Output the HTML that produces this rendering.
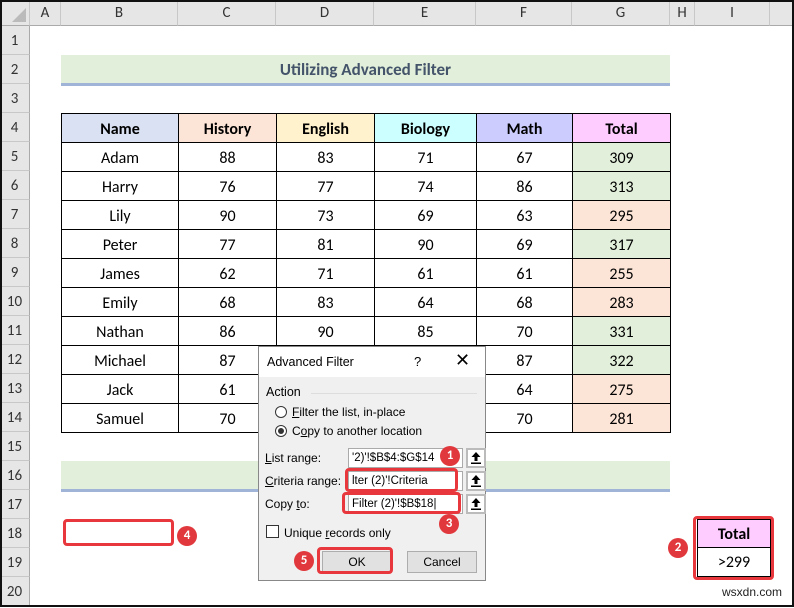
<!DOCTYPE html>
<html><head><meta charset="utf-8"><style>
*{margin:0;padding:0;box-sizing:border-box}
body{width:794px;height:607px;overflow:hidden;background:#fff;font-family:Calibri,"Liberation Sans",sans-serif;position:relative}
.a{position:absolute}
.hdr{position:absolute;top:0;height:26px;background:#e6e6e6;border-right:1px solid #c8c8c8;border-bottom:1px solid #aaa;font-size:15px;color:#333;text-align:center;line-height:27px}
.rn{position:absolute;left:0;width:30px;height:29px;background:#e6e6e6;border-bottom:1px solid #c8c8c8;border-right:1px solid #aaa;font-size:15px;color:#333;text-align:center;line-height:31px}
table{border-collapse:collapse;position:absolute;left:61px;top:113px;font-size:16px}
td{border:1px solid #000;height:29px;text-align:center;padding:2px 0 0;color:#000}
th{border:1px solid #000;height:29px;font-size:16px;padding-top:2px}
.g{background:#e2efda}.o{background:#fce4d6}
.red{position:absolute;border:3px solid #e8383d;border-radius:4px}
.num{position:absolute;width:20px;height:20px;border-radius:50%;background:#e0383c;color:#fff;font-size:13px;font-weight:bold;text-align:center;line-height:20px}
.dlg{position:absolute;left:258px;top:346px;width:228px;height:235px;background:#f0f0f0;border:1px solid #888;font-family:"Liberation Sans",sans-serif;font-size:12px;color:#000}
.inp{position:absolute;background:#fff;border:1px solid #aaa;height:20px;line-height:19px;padding-left:3px;font-size:11.5px;white-space:nowrap;overflow:hidden}
.up{position:absolute;width:20px;height:20px;background:#fff;border:2px solid #bbb}
</style></head><body>
<div class="hdr" style="left:0;width:30px"><div class="a" style="right:3px;bottom:3px;width:0;height:0;border-left:14px solid transparent;border-bottom:14px solid #bbb"></div></div>
<div class="hdr" style="left:30px;width:31px">A</div>
<div class="hdr" style="left:61px;width:117px">B</div>
<div class="hdr" style="left:178px;width:98px">C</div>
<div class="hdr" style="left:276px;width:98px">D</div>
<div class="hdr" style="left:374px;width:102px">E</div>
<div class="hdr" style="left:476px;width:96px">F</div>
<div class="hdr" style="left:572px;width:98px">G</div>
<div class="hdr" style="left:670px;width:25px">H</div>
<div class="hdr" style="left:695px;width:75px">I</div>
<div class="hdr" style="left:770px;width:24px"></div>

<div class="rn" style="top:26px">1</div><div class="rn" style="top:55px">2</div><div class="rn" style="top:84px">3</div><div class="rn" style="top:113px">4</div><div class="rn" style="top:142px">5</div><div class="rn" style="top:171px">6</div><div class="rn" style="top:200px">7</div><div class="rn" style="top:229px">8</div><div class="rn" style="top:258px">9</div><div class="rn" style="top:287px">10</div><div class="rn" style="top:316px">11</div><div class="rn" style="top:345px">12</div><div class="rn" style="top:374px">13</div><div class="rn" style="top:403px">14</div><div class="rn" style="top:432px">15</div><div class="rn" style="top:461px">16</div><div class="rn" style="top:490px">17</div><div class="rn" style="top:519px">18</div><div class="rn" style="top:548px">19</div><div class="rn" style="top:577px">20</div>

<div class="a" style="left:61px;top:55px;width:609px;height:31px;background:#e2efda;border-bottom:3px solid #9fb4d6;text-align:center;line-height:30px;font-size:17px;font-weight:bold;color:#44546a">Utilizing Advanced Filter</div>
<div class="a" style="left:61px;top:461px;width:609px;height:31px;background:#e2efda;border-bottom:3px solid #9fb4d6"></div>

<table>
<tr><th style="width:117px;background:#d9e1f2">Name</th><th style="width:98px;background:#fce4d6">History</th><th style="width:98px;background:#fff2cc">English</th><th style="width:102px;background:#ccffff">Biology</th><th style="width:96px;background:#ccccff">Math</th><th style="width:98px;background:#ffccff">Total</th></tr>
<tr><td>Adam</td><td>88</td><td>83</td><td>71</td><td>67</td><td class="g">309</td></tr>
<tr><td>Harry</td><td>76</td><td>77</td><td>74</td><td>86</td><td class="g">313</td></tr>
<tr><td>Lily</td><td>90</td><td>73</td><td>69</td><td>63</td><td class="o">295</td></tr>
<tr><td>Peter</td><td>77</td><td>81</td><td>90</td><td>69</td><td class="g">317</td></tr>
<tr><td>James</td><td>62</td><td>71</td><td>61</td><td>61</td><td class="o">255</td></tr>
<tr><td>Emily</td><td>68</td><td>83</td><td>64</td><td>68</td><td class="o">283</td></tr>
<tr><td>Nathan</td><td>86</td><td>90</td><td>85</td><td>70</td><td class="g">331</td></tr>
<tr><td>Michael</td><td>87</td><td></td><td></td><td>87</td><td class="g">322</td></tr>
<tr><td>Jack</td><td>61</td><td></td><td></td><td>64</td><td class="o">275</td></tr>
<tr><td>Samuel</td><td>70</td><td></td><td></td><td>70</td><td class="o">281</td></tr>
</table>

<div class="a" style="left:697px;top:519px;width:74px;height:29px;background:#ffccff;border:1px solid #000;text-align:center;line-height:30px;font-size:16px;font-weight:bold">Total</div>
<div class="a" style="left:697px;top:548px;width:74px;height:29px;border:1px solid #000;border-top:none;text-align:center;line-height:30px;font-size:16px">&gt;299</div>
<div class="red" style="left:693px;top:516px;width:81px;height:64px"></div>
<div class="num" style="left:668px;top:538px">2</div>

<div class="red" style="left:63px;top:519px;width:111px;height:27px"></div>
<div class="num" style="left:177px;top:526px">4</div>

<div class="dlg">
<div class="a" style="left:0;top:0;width:226px;height:30px;background:#fff"></div>
<div class="a" style="left:8px;top:8px;font-size:12.5px">Advanced Filter</div>
<div class="a" style="left:155px;top:7px;font-size:13px">?</div>
<div class="a" style="left:196px;top:3px;font-size:18px;font-weight:300">✕</div>
<div class="a" style="left:7px;top:38px;font-size:12.5px">Action</div>
<div class="a" style="left:52px;top:46px;width:166px;border-top:1px solid #ddd"></div>
<div class="a" style="left:16px;top:59px;width:12px;height:12px;border:1px solid #333;border-radius:50%;background:#fff"></div>
<div class="a" style="left:33px;top:58px"><u>F</u>ilter the list, in-place</div>
<div class="a" style="left:16px;top:78px;width:12px;height:12px;border:1px solid #333;border-radius:50%;background:#fff"><div class="a" style="left:2px;top:2px;width:6px;height:6px;border-radius:50%;background:#333"></div></div>
<div class="a" style="left:33px;top:77px">C<u>o</u>py to another location</div>
<div class="a" style="left:6px;top:104px"><u>L</u>ist range:</div>
<div class="inp" style="left:89px;top:101px;width:115px">'2)'!$B$4:$G$14</div>
<div class="a" style="left:6px;top:127px"><u>C</u>riteria range:</div>
<div class="inp" style="left:89px;top:124px;width:115px">lter (2)'!Criteria</div>
<div class="a" style="left:6px;top:150px">Copy <u>t</u>o:</div>
<div class="inp" style="left:89px;top:147px;width:115px">Filter (2)'!$B$18|</div>
<div class="up" style="left:207px;top:101px"><svg width="16" height="16" viewBox="0 0 16 16"><path d="M8 2 L3.5 7 H6.5 V11 H9.5 V7 H12.5 Z" fill="#000"/><rect x="3" y="12.5" width="10" height="1.5" fill="#000"/></svg></div>
<div class="up" style="left:207px;top:124px"><svg width="16" height="16" viewBox="0 0 16 16"><path d="M8 2 L3.5 7 H6.5 V11 H9.5 V7 H12.5 Z" fill="#000"/><rect x="3" y="12.5" width="10" height="1.5" fill="#000"/></svg></div>
<div class="up" style="left:207px;top:147px"><svg width="16" height="16" viewBox="0 0 16 16"><path d="M8 2 L3.5 7 H6.5 V11 H9.5 V7 H12.5 Z" fill="#000"/><rect x="3" y="12.5" width="10" height="1.5" fill="#000"/></svg></div>
<div class="a" style="left:7px;top:178px;width:13px;height:13px;border:1px solid #333;background:#fff"></div>
<div class="a" style="left:25px;top:179px">Unique <u>r</u>ecords only</div>
<div class="a" style="left:63px;top:204px;width:70px;height:22px;border:1px solid #adadad;background:#e1e1e1;text-align:center;line-height:20px">OK</div>
<div class="a" style="left:148px;top:204px;width:70px;height:22px;border:1px solid #adadad;background:#e1e1e1;text-align:center;line-height:20px">Cancel</div>
</div>
<div class="red" style="left:345px;top:468px;width:113px;height:24px"></div>
<div class="red" style="left:342px;top:492px;width:119px;height:22px"></div>
<div class="red" style="left:317px;top:547px;width:76px;height:27px"></div>
<div class="num" style="left:440px;top:446px">1</div>
<div class="num" style="left:439px;top:514px">3</div>
<div class="num" style="left:294px;top:551px">5</div>
<div class="a" style="left:722px;top:585px;font-family:'Liberation Sans',sans-serif;font-size:12px;color:#222">wsxdn.com</div>
<div class="a" style="left:0;top:0;width:794px;height:607px;border:2px solid #111"></div>
</body></html>
